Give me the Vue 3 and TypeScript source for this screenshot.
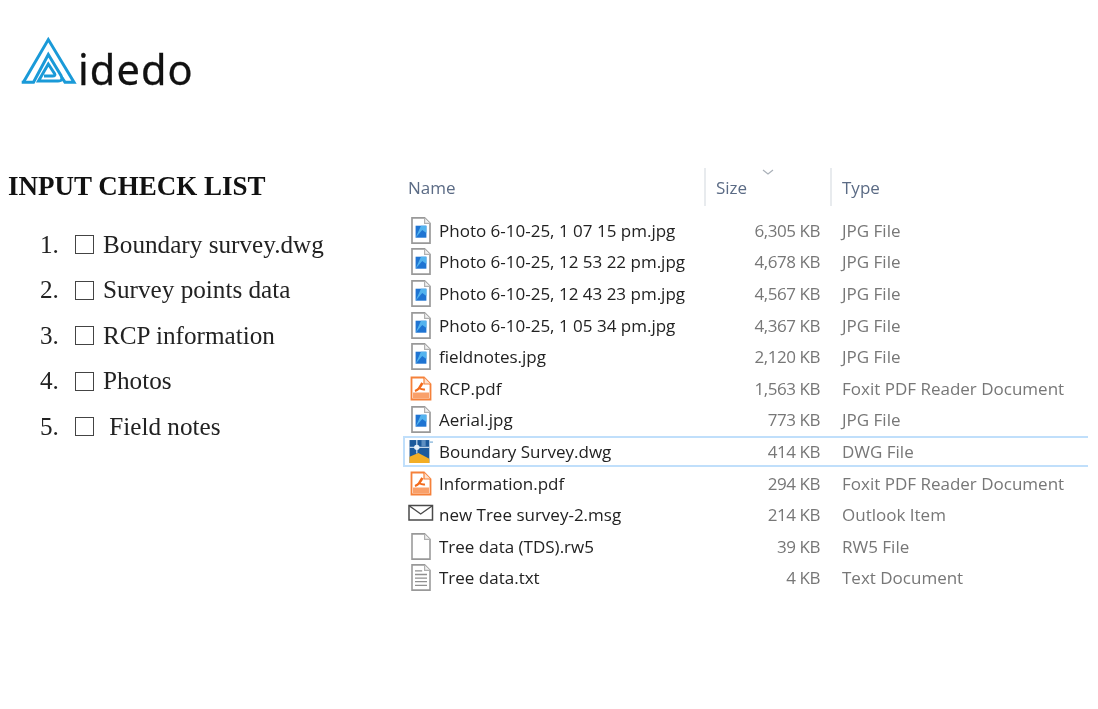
<script setup lang="ts">
type Kind = 'img' | 'pdf' | 'dwg' | 'mail' | 'blank' | 'txt'
interface FileRow { name: string; size: string; type: string; kind: Kind; selected?: boolean }

const checklist: string[] = ['Boundary survey.dwg', 'Survey points data', 'RCP information', 'Photos', '\u00a0Field notes']

const files: FileRow[] = [
  { name: 'Photo 6-10-25, 1 07 15 pm.jpg', size: '6,305 KB', type: 'JPG File', kind: 'img' },
  { name: 'Photo 6-10-25, 12 53 22 pm.jpg', size: '4,678 KB', type: 'JPG File', kind: 'img' },
  { name: 'Photo 6-10-25, 12 43 23 pm.jpg', size: '4,567 KB', type: 'JPG File', kind: 'img' },
  { name: 'Photo 6-10-25, 1 05 34 pm.jpg', size: '4,367 KB', type: 'JPG File', kind: 'img' },
  { name: 'fieldnotes.jpg', size: '2,120 KB', type: 'JPG File', kind: 'img' },
  { name: 'RCP.pdf', size: '1,563 KB', type: 'Foxit PDF Reader Document', kind: 'pdf' },
  { name: 'Aerial.jpg', size: '773 KB', type: 'JPG File', kind: 'img' },
  { name: 'Boundary Survey.dwg', size: '414 KB', type: 'DWG File', kind: 'dwg', selected: true },
  { name: 'Information.pdf', size: '294 KB', type: 'Foxit PDF Reader Document', kind: 'pdf' },
  { name: 'new Tree survey-2.msg', size: '214 KB', type: 'Outlook Item', kind: 'mail' },
  { name: 'Tree data (TDS).rw5', size: '39 KB', type: 'RW5 File', kind: 'blank' },
  { name: 'Tree data.txt', size: '4 KB', type: 'Text Document', kind: 'txt' },
]
</script>

<template>
  <div class="page">
    <header class="brand">
      <svg class="mark" viewBox="0 0 58 50" width="58" height="50" aria-hidden="true">
        <g fill="none" stroke="#1a9ad8" stroke-width="3" stroke-linejoin="miter">
          <path d="M2.4 46.2 L27.3 3.6 L53 46.2 H44 L40.5 41" />
          <path d="M0.7 46.2 H12.5 L27.3 18.5 L40 39.5 Q43 45 37 45 H17.5 L27.3 28 L33.5 37.5 Q35 40 31.5 40 H23" />
        </g>
      </svg>
      <span class="word">idedo</span>
    </header>

    <main class="content">
      <section class="check">
        <h1 class="check-title">INPUT CHECK LIST</h1>
        <ol class="check-list">
          <li v-for="(item, i) in checklist" :key="i" class="check-item">
            <span class="num">{{ i + 1 }}.</span>
            <span class="box"></span>
            <span class="label">{{ item }}</span>
          </li>
        </ol>
      </section>

      <section class="explorer">
        <div class="head">
          <div class="h-name">Name</div>
          <div class="h-size">
            <span>Size</span>
            <svg class="chev" viewBox="0 0 12 6" width="12" height="6" aria-hidden="true">
              <path d="M1 1 L6 5 L11 1" fill="none" stroke="#a9b0b8" stroke-width="1.2" />
            </svg>
          </div>
          <div class="h-type">Type</div>
        </div>

        <div class="rows">
          <div v-for="f in files" :key="f.name" class="row" :class="{ selected: f.selected }">
            <span class="icon">
              <svg v-if="f.kind === 'img'" viewBox="0 0 20 24" width="24" height="29">
                <path d="M2.5 1.5 H13 L17.5 6 V22.5 H2.5 Z" fill="#fff" stroke="#999" stroke-width="1.4" />
                <path d="M13 1.5 V6 H17.5" fill="#f2f2f2" stroke="#b0b0b0" stroke-width="1" />
                <rect x="5.5" y="8" width="9" height="10" fill="#1f74d2" />
                <path d="M5.5 18 L11 11.5 L14.5 14 V8 H10 Z" fill="#53b3ee" />
              </svg>
              <svg v-else-if="f.kind === 'pdf'" viewBox="0 0 22 25" width="22" height="25">
                <path d="M1.5 1.5 H14 L20.5 8 V23.5 H1.5 Z" fill="#fff" stroke="#f5813a" stroke-width="1.8" />
                <path d="M14 1.5 V8 H20.5" fill="#fde0cc" stroke="#f5813a" stroke-width="1.2" />
                <path d="M5 15 Q10 13 12.5 7 M12 7 L9 12 Q12 14 15 13.5" fill="none" stroke="#f26a1b" stroke-width="2" />
                <rect x="3" y="16.5" width="16" height="6" fill="#f9a06a" />
              </svg>
              <svg v-else-if="f.kind === 'dwg'" viewBox="0 0 24 24" width="25" height="25">
                <rect x="0.5" y="1" width="19" height="22" fill="#1c5a9c" />
                <rect x="12" y="1" width="4" height="6" fill="#5d8fc2" />
                <path d="M0.5 8 H19.5 M7.5 1 V14" stroke="#c3d8ec" stroke-width="1.2" />
                <circle cx="7.5" cy="8" r="2.6" fill="#e8f1f9" />
                <path d="M0.5 17 L9 13.5 L19.5 19 V23 H0.5 Z" fill="#f3ae25" />
                <path d="M19.5 3 H23" stroke="#9ec4e2" stroke-width="1.6" />
              </svg>
              <svg v-else-if="f.kind === 'mail'" viewBox="0 0 26 18" width="26" height="18" class="mail">
                <rect x="1" y="1.5" width="23.5" height="14.5" fill="#fff" stroke="#4a4a4a" stroke-width="1.5" />
                <path d="M1.5 2 L12.7 10 L24 2" fill="none" stroke="#4a4a4a" stroke-width="1.4" />
              </svg>
              <svg v-else viewBox="0 0 20 24" width="24" height="29">
                <path d="M2.5 1.5 H13 L17.5 6 V22.5 H2.5 Z" fill="#fff" stroke="#999" stroke-width="1.3" />
                <path d="M13 1.5 V6 H17.5" fill="#f2f2f2" stroke="#b0b0b0" stroke-width="1" />
                <path v-if="f.kind === 'txt'" d="M5 6.5 H11 M5 9.5 H15 M5 12.5 H15 M5 15.5 H15 M5 18.5 H15" stroke="#909090" stroke-width="1.1" />
              </svg>
            </span>
            <span class="name">{{ f.name }}</span>
            <span class="size">{{ f.size }}</span>
            <span class="type">{{ f.type }}</span>
          </div>
        </div>
      </section>
    </main>
  </div>
</template>

<style scoped>
.page {
  width: 1098px;
  height: 709px;
  background: #fff;
  overflow: hidden;
  box-sizing: border-box;
  padding: 36px 10px 0 8px;
}
.brand {
  display: flex;
  align-items: flex-end;
  height: 50px;
  margin-left: 13px;
}
.mark {
  flex: none;
}
.word {
  margin-left: -1px;
  font-family: "Noto Sans", sans-serif;
  font-size: 41.5px;
  font-weight: 400;
  line-height: 33px;
  letter-spacing: 1.1px;
  color: #111;
  -webkit-text-stroke: 0.3px #111;
  filter: blur(0.3px);
}
.content {
  display: flex;
  margin-top: 82px;
}
.check {
  width: 395px;
  flex: none;
  font-family: "Liberation Serif", serif;
  color: #222;
  filter: blur(0.45px);
}
.check-title {
  margin: 3px 0 0;
  font-size: 27px;
  line-height: 30px;
  font-weight: bold;
  color: #111;
}
.check-list {
  list-style: none;
  margin: 21px 0 0;
  padding: 0 0 0 32px;
}
.check-item {
  display: flex;
  align-items: center;
  height: 45.5px;
  font-size: 25.2px;
}
.num {
  width: 35px;
  flex: none;
}
.box {
  width: 19px;
  height: 19px;
  flex: none;
  box-sizing: border-box;
  border: 1.5px solid #444;
  margin-right: 9px;
}
.explorer {
  width: 685px;
  flex: none;
  font-family: "Open Sans", sans-serif;
  filter: blur(0.45px);
}
.head {
  display: grid;
  grid-template-columns: 301px 126px 1fr;
  height: 38px;
  font-size: 17px;
  color: #5b6b85;
}
.head > div {
  display: flex;
  align-items: center;
  position: relative;
  padding-left: 10px;
}
.head > .h-name {
  padding-left: 5px;
}
.h-size,
.h-type {
  border-left: 2px solid #e8ebee;
}
.chev {
  position: absolute;
  top: 1px;
  left: 56px;
}
.rows {
  margin-top: 8.5px;
}
.row {
  display: grid;
  grid-template-columns: 36px 300px 81px 1fr;
  align-items: center;
  height: 31.6px;
  box-sizing: border-box;
  font-size: 17px;
}
.row.selected {
  box-shadow: inset 0 2px 0 #c0dffb, inset 0 -2px 0 #c0dffb, inset 2px 0 0 #c0dffb;
}
.icon {
  display: flex;
  align-items: center;
  justify-content: center;
}
.mail {
  margin-bottom: 3px;
}
.name {
  color: #222;
  white-space: nowrap;
}
.size {
  color: #777;
  text-align: right;
  white-space: nowrap;
  letter-spacing: -0.45px;
}
.type {
  color: #777;
  padding-left: 22px;
  white-space: nowrap;
}
</style>
